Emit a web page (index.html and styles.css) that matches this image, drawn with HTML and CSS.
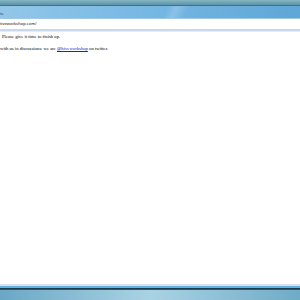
FILE: index.html
```html
<!DOCTYPE html>
<html lang="en">
<head>
  <meta charset="UTF-8">
  <title>Hive Workshop</title>
  <link rel="stylesheet" href="styles.css">
</head>
<body>
  <div class="window">
    <!-- Заголовок окна -->
    <div class="titlebar"></div>

    <!-- Вкладки -->
    <div class="tabbar">
      <span class="tab-title">ts.</span>
    </div>

    <!-- Адресная строка -->
    <div class="addressbar">tiveworkshop.com/</div>
    <div class="toolbar-line"></div>

    <!-- Содержимое страницы -->
    <div class="content">
      <p class="notice">Please give it time to finish up.</p>
      <p class="social">with us in discussions: we are <a href="#">@hiveworkshop</a> on twitter.</p>
    </div>

    <div class="status-line"></div>
  </div>

  <!-- Панель задач -->
  <div class="taskbar"></div>
</body>
</html>
```

FILE: styles.css
```css
/* Общие стили */
body {
  margin: 0;
  width: 300px;
  height: 300px;
  display: flex;
  flex-direction: column;
  overflow: hidden;
  background-color: #ffffff;
}

.window {
  flex: 1;
  display: flex;
  flex-direction: column;
}

/* Заголовок окна */
.titlebar {
  height: 5px;
  background: linear-gradient(to bottom, #86b6c3, #5b93a6);
  border-bottom: 1px solid #3f7488;
}

/* Вкладки */
.tabbar {
  height: 12px;
  display: flex;
  align-items: flex-end;
  background:
    linear-gradient(115deg, transparent 55%, rgba(255, 255, 255, 0.18) 58%, transparent 62%),
    linear-gradient(to right, #93c7e9, #76b7e3 50%, #5ea6d7);
  border-bottom: 1px solid #9fc9e6;
}

.tab-title {
  font-family: "Liberation Sans", Arial, sans-serif;
  font-size: 4px;
  color: #2a4a66;
  line-height: 6px;
  padding-bottom: 1px;
}

/* Адресная строка */
.addressbar {
  height: 10px;
  line-height: 10px;
  background-color: #ffffff;
  font-family: "Liberation Sans", Arial, sans-serif;
  font-size: 4.4px;
  color: #222222;
}

.toolbar-line {
  height: 2px;
  background-color: #c9d8ee;
  border-bottom: 1px solid #e6edf7;
}

/* Содержимое */
.content {
  flex: 1;
  padding: 2px 0;
  font-family: "Liberation Serif", "Times New Roman", serif;
  font-size: 4.7px;
  color: #000000;
}

.content p {
  margin: 0 0 7px 0;
  line-height: 5px;
}

.notice {
  padding-left: 2px;
}

.content a {
  color: #2020cc;
}

.status-line {
  height: 2px;
  background-color: #dcdff0;
}

/* Панель задач */
.taskbar {
  height: 12px;
  border-top: 2px solid #5fb4e2;
  box-shadow: inset 0 1px 0 #1b3a4e, inset 0 2px 0 #2b5870;
  background: linear-gradient(to right, #6aa7c5, #a9d3e4 50%, #6fabc7);
}
```
